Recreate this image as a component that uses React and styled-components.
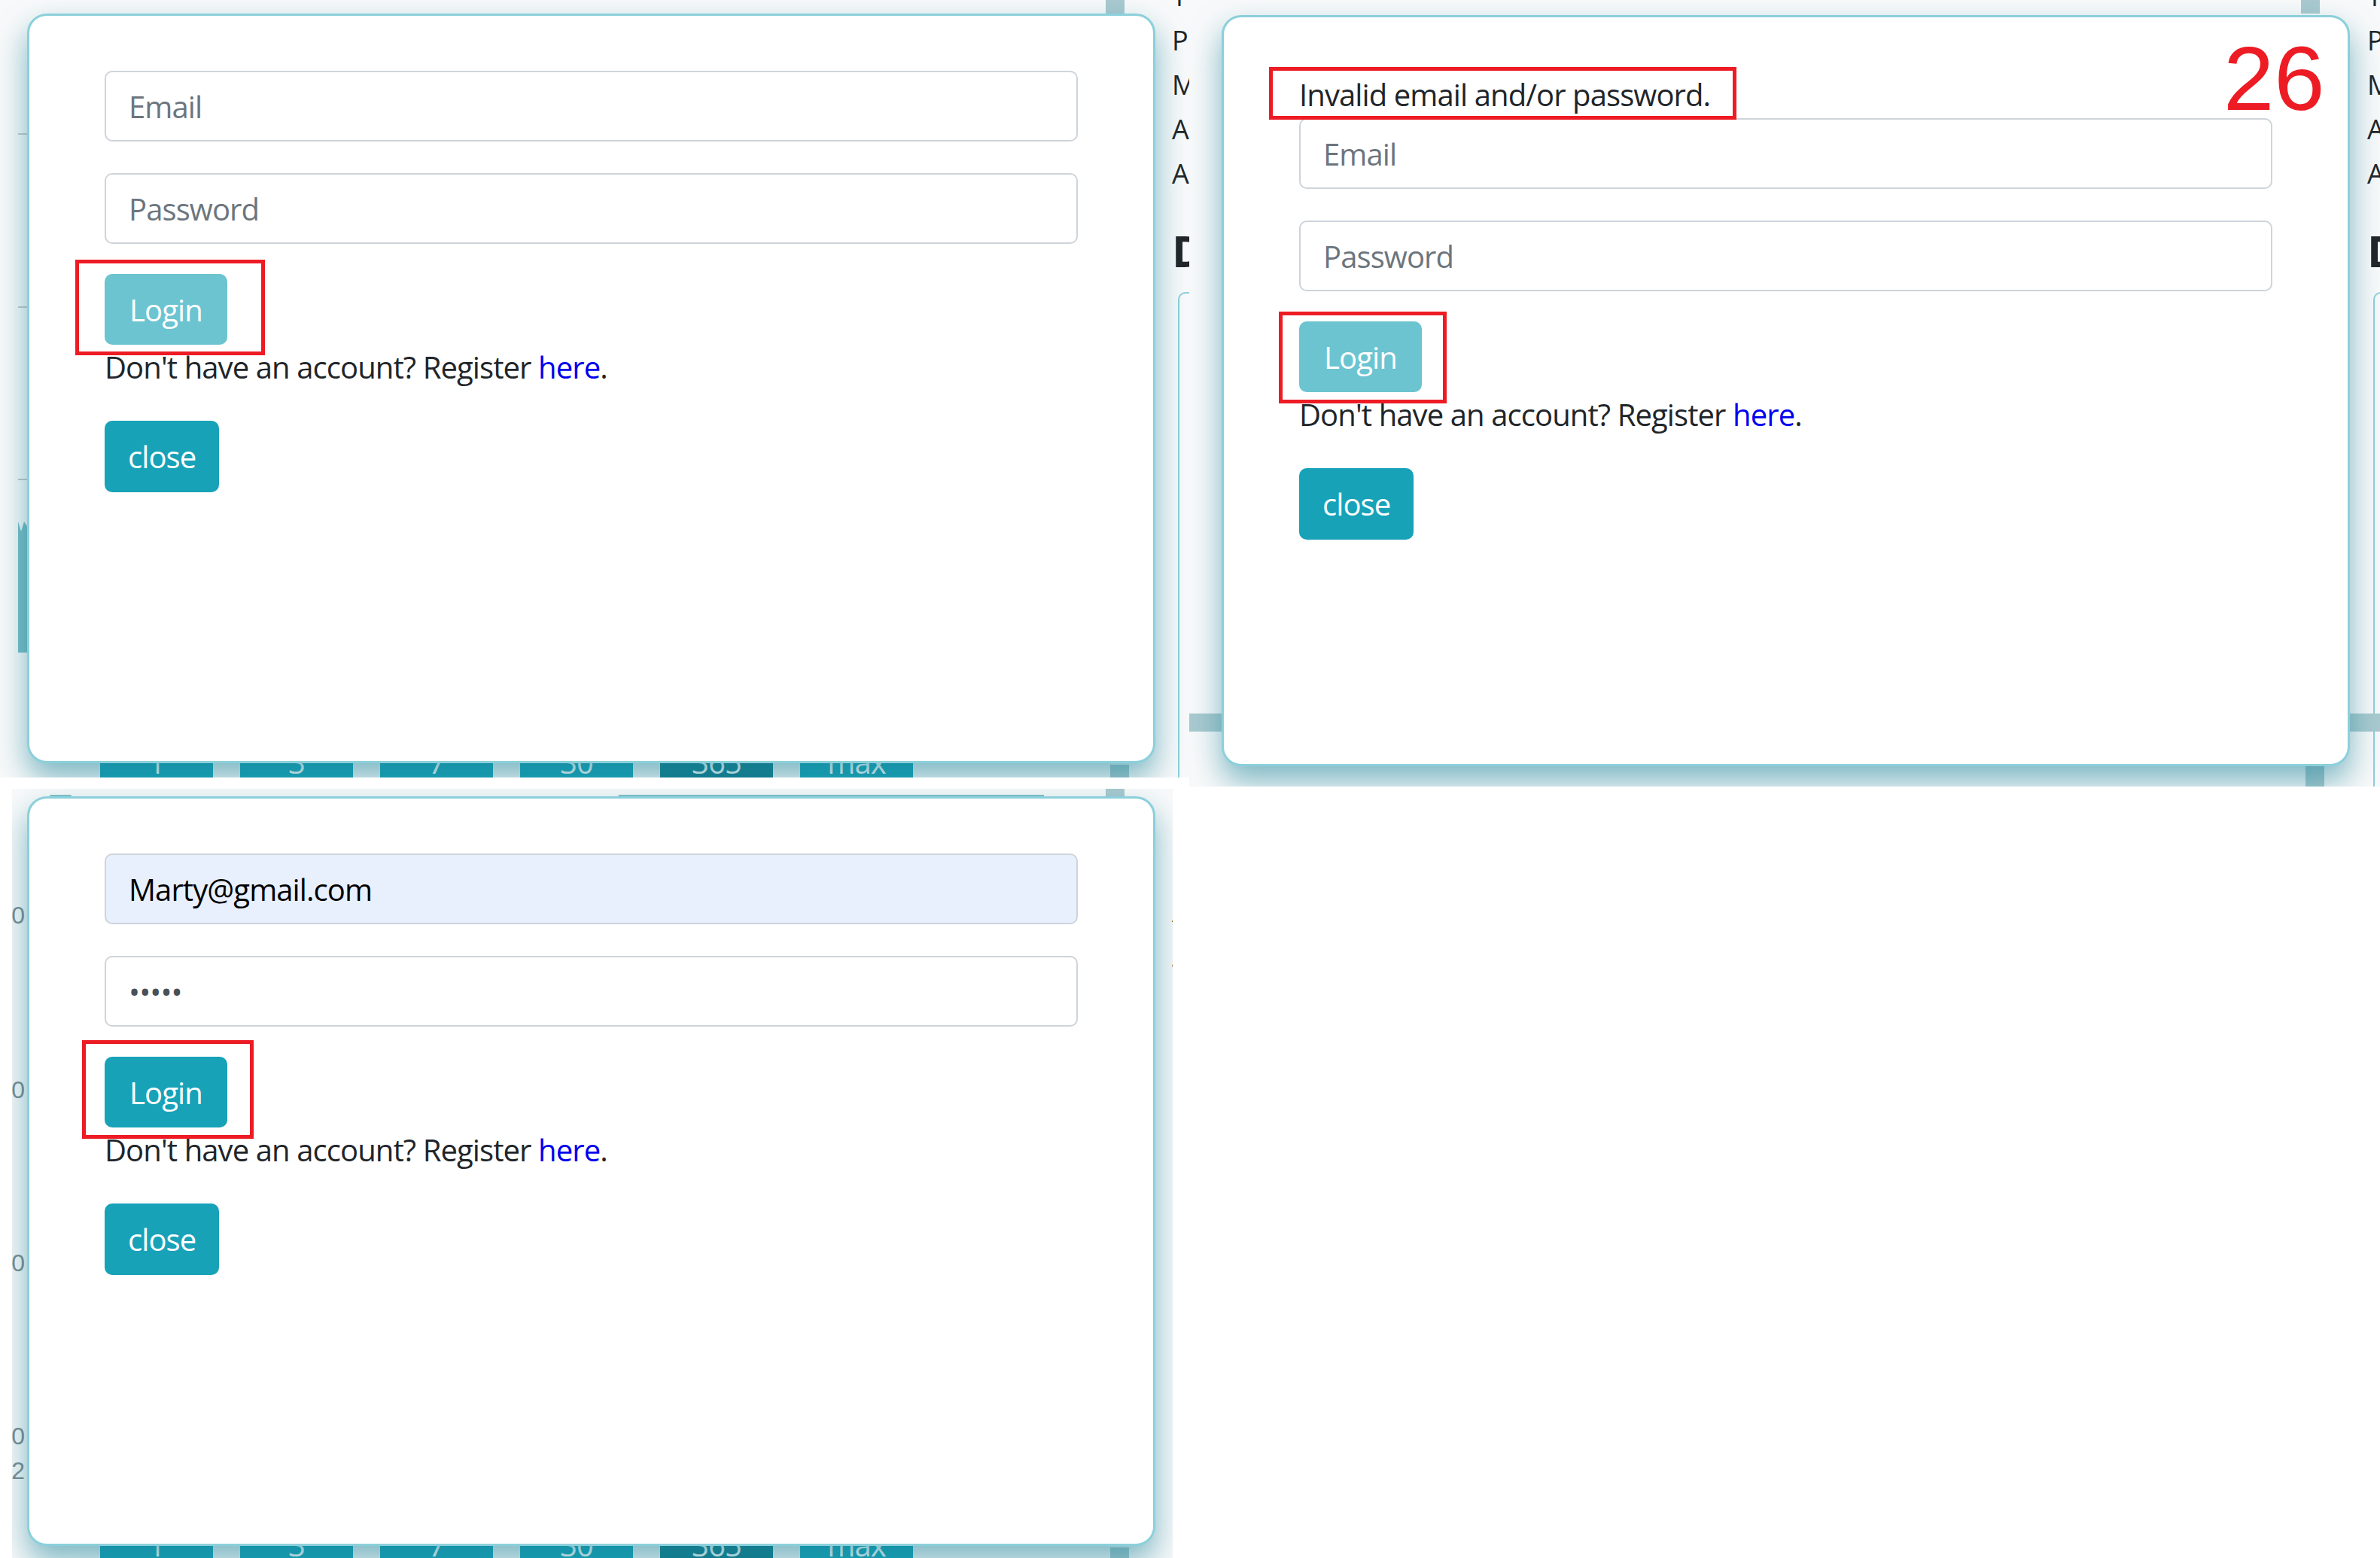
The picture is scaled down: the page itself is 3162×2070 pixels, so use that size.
import React from 'react';
import styled, { createGlobalStyle } from 'styled-components';

const GlobalStyle = createGlobalStyle`
  html, body {
    margin: 0;
    padding: 0;
    background: #ffffff;
  }
  body {
    font-family: "Open Sans", "Noto Sans", sans-serif;
  }
  *, *::before, *::after {
    box-sizing: border-box;
  }
`;

const TEAL = '#17a2b8';

const Collage = styled.div`
  display: grid;
  grid-template-columns: 1580px 1582px;
  grid-template-rows: 1048px 1022px;
  width: 3162px;
  height: 2070px;
  overflow: hidden;
  background: #ffffff;
`;

const Tile = styled.div`
  position: relative;
  overflow: hidden;
  width: ${p => p.$w}px;
  height: ${p => p.$h}px;
  margin-left: ${p => p.$ml || 0}px;
  background: #f8f9fa;
`;

/* ---------- the page that sits behind the modal ---------- */

const Page = styled.div`
  display: flex;
  width: 1640px;
  height: ${p => p.$h}px;
  margin-left: ${p => p.$dx}px;
  margin-top: ${p => p.$dy}px;
`;

const Gutter = styled.div`
  flex: none;
  width: 36px;
  height: 100%;
`;

const Main = styled.div`
  flex: none;
  width: 1433px;
  display: flex;
  flex-direction: column;
  justify-content: space-between;
`;

const RangeRow = styled.div`
  display: flex;
  gap: 36px;
  padding-left: 97px;
`;

const RangeButton = styled.div`
  width: 150px;
  height: 95px;
  display: flex;
  align-items: center;
  justify-content: center;
  font-size: 40px;
  letter-spacing: -0.9px;
  color: #ffffff;
  background: ${p => (p.$active ? '#117a8b' : TEAL)};
`;

const ScrollTrack = styled.div`
  flex: none;
  width: 31px;
  display: flex;
  flex-direction: column;
  justify-content: space-between;
`;

const ScrollPiece = styled.div`
  width: 25px;
  height: ${p => p.$h}px;
  background: #a9c9cf;
  align-self: ${p => (p.$end ? 'flex-end' : 'flex-start')};
`;

const Sidebar = styled.div`
  flex: none;
  margin-left: 57px;
  width: 120px;
  display: flex;
  flex-direction: column;
  color: #212529;
`;

const SideLetter = styled.div`
  font-size: 36px;
  line-height: 59px;
  &:first-child {
    margin-top: -35px;
  }
`;

const SideHeading = styled.div`
  margin-top: 38px;
  font-size: 58px;
  font-weight: 700;
  line-height: 70px;
`;

const SideCard = styled.div`
  margin-top: 20px;
  margin-left: 8px;
  flex: 1;
  border: 2px solid #8bd0db;
  border-right: none;
  border-bottom: none;
  border-radius: 10px 0 0 0;
`;

const AxisLabels = styled.div`
  display: flex;
  flex-direction: column;
`;

const AxisLabel = styled.div`
  width: 33px;
  text-align: right;
  white-space: nowrap;
  direction: rtl;
  overflow: hidden;
  font-family: "Liberation Sans", Arial, sans-serif;
  font-size: 32px;
  line-height: 32px;
  color: #7d8a90;
  margin-top: ${p => p.$mt}px;
`;

const ChartGutter = () => (
  <svg width="36" height="1060" viewBox="0 0 36 1060">
    <line x1="24" y1="178" x2="36" y2="178" stroke="#c3c8cc" strokeWidth="2" />
    <line x1="24" y1="408" x2="36" y2="408" stroke="#c3c8cc" strokeWidth="2" />
    <line x1="24" y1="637" x2="36" y2="637" stroke="#c3c8cc" strokeWidth="2" />
    <polygon points="24,693 28,706 32,693 36,699 36,867 24,867" fill="#78bbc4" />
  </svg>
);

const TopChart = () => (
  <svg width="1433" height="30" viewBox="0 0 1433 30">
    <polygon points="30,16 59,16 54,30 34,30" fill="#80c0c8" />
    <polygon points="786,16 1351,16 1351,30 782,30" fill="#80c0c8" />
  </svg>
);

const ranges = ['1', '3', '7', '30', '365', 'max'];

const BehindPage = ({ dx, dy, height, variant }) => (
  <Page $dx={dx} $dy={dy} $h={height}>
    <Gutter>
      {variant === 'chart' && <ChartGutter />}
      {variant === 'axis' && (
        <AxisLabels>
          <AxisLabel $mt={160}>1000</AxisLabel>
          <AxisLabel $mt={200}>800</AxisLabel>
          <AxisLabel $mt={198}>600</AxisLabel>
          <AxisLabel $mt={198}>400</AxisLabel>
          <AxisLabel $mt={14}>2</AxisLabel>
        </AxisLabels>
      )}
    </Gutter>
    <Main>
      {variant === 'axis' ? <TopChart /> : <div />}
      {variant === 'bar' ? (
        <div />
      ) : (
        <RangeRow>
          {ranges.map(r => (
            <RangeButton key={r} $active={r === '365'}>{r}</RangeButton>
          ))}
        </RangeRow>
      )}
    </Main>
    <ScrollTrack>
      <ScrollPiece $h={18} />
      <ScrollPiece $h={44} $end />
    </ScrollTrack>
    <Sidebar>
      <SideLetter>T</SideLetter>
      <SideLetter>P</SideLetter>
      <SideLetter>M</SideLetter>
      <SideLetter>A</SideLetter>
      <SideLetter>A</SideLetter>
      <SideHeading>D</SideHeading>
      <SideCard />
    </Sidebar>
  </Page>
);

const WideBar = styled.div`
  position: absolute;
  left: 0;
  right: 0;
  top: 948px;
  height: 24px;
  background: #a9c9cf;
`;

/* ---------- the modal ---------- */

const ModalLayer = styled.div`
  position: absolute;
  inset: 0;
  padding-left: ${p => p.$x}px;
  padding-top: ${p => p.$y}px;
`;

const Card = styled.div`
  width: ${p => p.$w || 1499}px;
  height: ${p => p.$h || 996}px;
  padding: 73px 100px 0 100px;
  background: #ffffff;
  border: 3px solid #8bd0db;
  border-radius: 26px;
  box-shadow: 0 20px 40px rgba(23, 130, 150, 0.55);
  font-size: 40px;
  letter-spacing: -0.9px;
  color: #212529;
`;

const Marked = styled.div`
  position: relative;
  width: fit-content;

  &::after {
    content: '';
    position: absolute;
    left: ${p => p.$l}px;
    top: ${p => p.$t}px;
    width: ${p => p.$w}px;
    height: ${p => p.$h}px;
    border: 5px solid #ed1c24;
    pointer-events: none;
  }
`;

const ErrorLine = styled.div`
  height: 60px;
  line-height: 60px;
  margin-bottom: 1px;
  white-space: nowrap;
`;

const FormGroup = styled.div`
  margin-bottom: ${p => p.$mb}px;
`;

const Field = styled.input`
  display: block;
  width: 100%;
  height: 94px;
  padding: 0 30px;
  border: 2px solid #ced4da;
  border-radius: 10px;
  font-family: "Open Sans", "Noto Sans", sans-serif;
  font-size: 40px;
  letter-spacing: -0.9px;
  color: ${p => (p.$filled ? '#000000' : '#495057')};
  background: ${p => (p.$filled ? '#e8f0fe' : '#ffffff')};
  outline: none;

  &::placeholder {
    color: #6c757d;
    opacity: 1;
  }
`;

const Button = styled.button`
  display: block;
  height: ${p => p.$h || 94}px;
  padding: 0 ${p => p.$px || 33}px;
  border: none;
  border-radius: 10px;
  font-family: "Open Sans", "Noto Sans", sans-serif;
  font-size: 40px;
  letter-spacing: -0.9px;
  color: #ffffff;
  background: ${p => (p.$muted ? '#6cc4d1' : TEAL)};
  cursor: pointer;
`;

const Hint = styled.p`
  margin: 0 0 41px 0;
  height: 60px;
  line-height: 60px;
  white-space: nowrap;
`;

const Link = styled.a`
  color: #0000ee;
  text-decoration: none;
`;

const BigNumber = styled.div`
  position: absolute;
  left: 1374px;
  top: 44px;
  font-family: "Liberation Sans", Arial, sans-serif;
  font-size: 121px;
  line-height: 1;
  color: #ed1c24;
`;

const LoginModal = ({ x, y, h, error, filled, mark }) => (
  <ModalLayer $x={x} $y={y}>
    <Card $h={h}>
      {error && (
        <Marked $l={-40} $t={-7} $w={621} $h={70}>
          <ErrorLine>Invalid email and/or password.</ErrorLine>
        </Marked>
      )}
      <FormGroup $mb={42}>
        {filled ? (
          <Field type="email" defaultValue="Marty@gmail.com" $filled />
        ) : (
          <Field type="email" placeholder="Email" />
        )}
      </FormGroup>
      <FormGroup $mb={40}>
        {filled ? (
          <Field type="password" defaultValue="12345" />
        ) : (
          <Field type="password" placeholder="Password" />
        )}
      </FormGroup>
      <Marked $l={mark.l} $t={mark.t} $w={mark.w} $h={mark.h}>
        <Button type="submit" $muted={!filled}>Login</Button>
      </Marked>
      <Hint>
        Don't have an account? Register <Link href="#register">here</Link>.
      </Hint>
      <Button type="button" $h={95} $px={31}>close</Button>
    </Card>
  </ModalLayer>
);

const App = () => (
  <>
    <GlobalStyle />
    <Collage>
      <Tile $w={1580} $h={1033}>
        <BehindPage dx={0} dy={0} height={1060} variant="chart" />
        <LoginModal x={36} y={18} mark={{ l: -39, t: -19, w: 252, h: 127 }} />
      </Tile>

      <Tile $w={1582} $h={1045}>
        <BehindPage dx={8} dy={0} height={1045} variant="bar" />
        <WideBar />
        <LoginModal x={43} y={20} h={998} error mark={{ l: -27, t: -13, w: 223, h: 122 }} />
        <BigNumber>26</BigNumber>
      </Tile>

      <Tile $w={1542} $h={1022} $ml={16}>
        <BehindPage dx={-16} dy={-8} height={1060} variant="axis" />
        <LoginModal x={20} y={10} filled mark={{ l: -30, t: -22, w: 228, h: 131 }} />
      </Tile>
    </Collage>
  </>
);

export default App;
